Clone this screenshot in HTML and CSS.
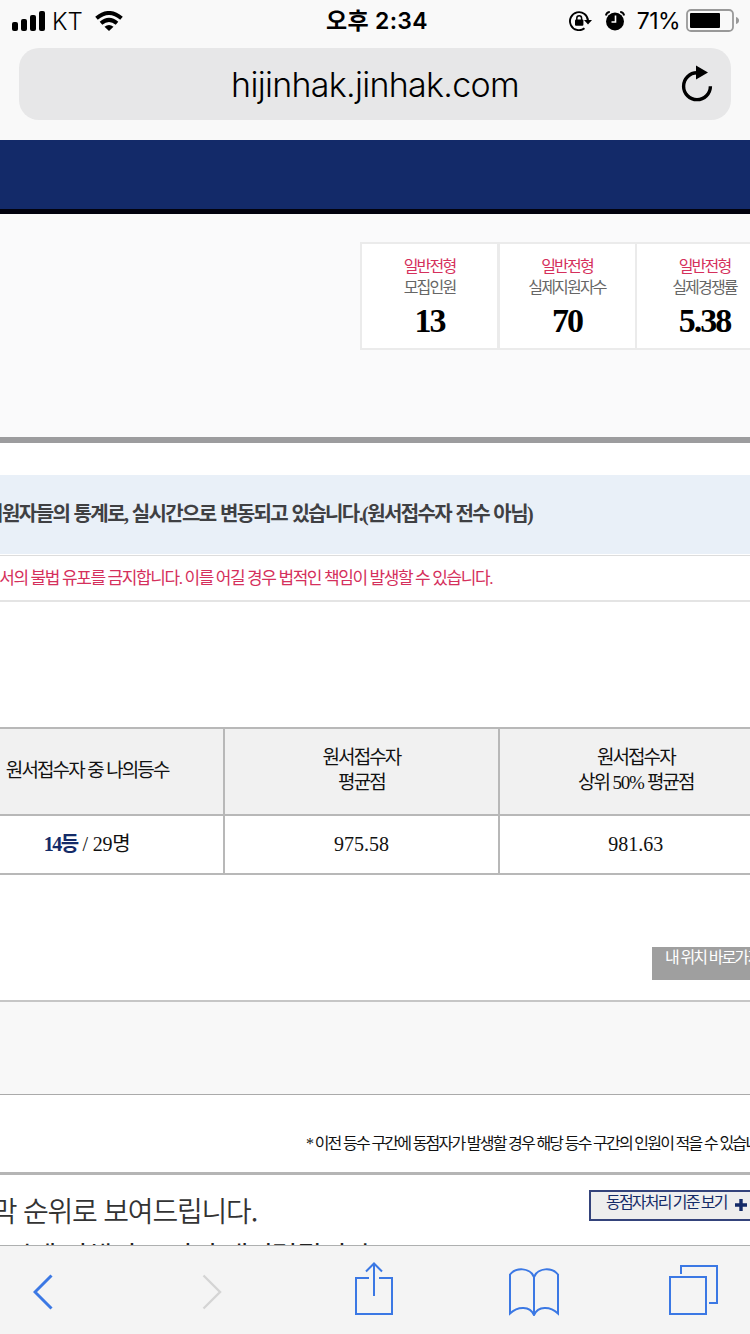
FILE: index.html
```html
<!DOCTYPE html>
<html lang="ko">

<head>
    <meta charset="UTF-8">
    <meta name="viewport" content="width=device-width, initial-scale=1.0">
    <title>hijinhak.jinhak.com</title>
    <link rel="stylesheet" href="styles.css">
</head>

<body>
    <header class="browser-top">
        <div class="status">
            <div class="status-left">
                <svg width="34" height="20" viewBox="0 0 34 20">
                    <rect x="0" y="11" width="6" height="9" rx="2" />
                    <rect x="9" y="8" width="6" height="12" rx="2" />
                    <rect x="18" y="4" width="6" height="16" rx="2" />
                    <rect x="27" y="0" width="6" height="20" rx="2" />
                </svg>
                <span class="carrier">KT</span>
                <svg class="wifi" width="28" height="20" viewBox="0 0 28 20">
                    <g fill="none" stroke="#000" stroke-width="4">
                        <path d="M1.5 7.2Q14-3.2 26.500 7.200" />
                        <path d="M6 12.200Q14 5.500 22 12.200" />
                    </g>
                    <path d="M9.500 15.800Q14 12.200 18.500 15.800L14 20z" />
                </svg>
            </div>
            <div class="time">오후 2:34</div>
            <div class="status-right">
                <svg width="24" height="20" viewBox="0 0 24 20">
                    <path d="M15.500 17.300A9 9 0 1 1 19 10" fill="none" stroke="#000" stroke-width="1.900" />
                    <path d="M15 9h8l-4 4.500z" />
                    <rect x="6" y="8.500" width="8.400" height="6.300" rx="1" />
                    <path d="M7.800 9V7.200a2.400 2.400 0 0 1 4.800 0V9" fill="none" stroke="#000" stroke-width="1.500" />
                </svg>
                <svg class="alarm" width="20" height="20" viewBox="0 0 20 20">
                    <circle cx="10" cy="10.500" r="9" />
                    <path d="M.8 4.500Q1.500 1.200 4.800.8M19.200 4.500Q18.500 1.200 15.200.8" fill="none" stroke="#000" stroke-width="1.800" />
                    <path d="M10.500 4.500V11H6.500" fill="none" stroke="#fff" stroke-width="1.600" />
                </svg>
                <span class="percent">71%</span>
                <svg width="53" height="23" viewBox="0 0 53 23">
                    <rect x="1" y="1" width="46" height="21" rx="4" fill="none" stroke="#999" stroke-width="1.800" />
                    <rect x="4" y="4" width="30" height="15" rx="1" />
                    <path d="M50 8q3 1 3 3.500t-3 3.500z" fill="#999" />
                </svg>
            </div>
        </div>
        <div class="address">
            <span class="url">hijinhak.jinhak.com</span>
            <svg class="reload" width="34" height="38" viewBox="0 0 34 38">
                <path d="M17 7.800A13.400 13.400 0 1 0 30.400 21.200" fill="none" stroke="#000" stroke-width="3.400" />
                <path d="M16 .5l12 7-12 7z" />
            </svg>
        </div>
    </header>

    <main class="page">
        <div class="navbar"></div>

        <section class="summary">
            <div class="card">
                <span class="type">일반전형</span>
                <span class="label">모집인원</span>
                <strong>13</strong>
            </div>
            <div class="card">
                <span class="type">일반전형</span>
                <span class="label">실제지원자수</span>
                <strong>70</strong>
            </div>
            <div class="card">
                <span class="type">일반전형</span>
                <span class="label">실제경쟁률</span>
                <strong>5.38</strong>
            </div>
        </section>

        <div class="notice"><span>지원자들의 통계로, 실시간으로 변동되고 있습니다.(원서접수자 전수 아님)</span></div>
        <div class="warning"><span>서의 불법 유포를 금지합니다. 이를 어길 경우 법적인 책임이 발생할 수 있습니다.</span></div>

        <table class="score">
            <tr>
                <th>원서접수자 중 나의등수</th>
                <th>원서접수자<br>평균점</th>
                <th>원서접수자<br>상위 <span class="num">50%</span> 평균점</th>
            </tr>
            <tr>
                <td class="rank"><b>14등</b> / 29명</td>
                <td>975.58</td>
                <td>981.63</td>
            </tr>
        </table>

        <div class="position-row">
            <div class="position-btn">내 위치 바로가기</div>
        </div>
        <div class="graph"></div>
        <div class="remark">* 이전 등수 구간에 동점자가 발생할 경우 해당 등수 구간의 인원이 적을 수 있습니다.</div>

        <section class="guide">
            <div class="guide-text">
                <p class="line1"><span>막 순위로 보여드립니다.</span></p>
                <p class="line2"><span>시에 의해이로 되어 재정렬됩니다</span></p>
            </div>
            <div class="tie-btn">
                <span>동점자처리 기준 보기</span>
                <svg width="12" height="12" viewBox="0 0 12 12">
                    <path d="M6 0v12M0 6h12" stroke="#142b68" stroke-width="3.400" />
                </svg>
            </div>
        </section>
    </main>

    <footer class="toolbar">
        <svg width="20" height="36" viewBox="0 0 20 36">
            <path d="M18.500 1.500L2 18l16.500 16.500" stroke-width="3" />
        </svg>
        <svg class="forward" width="20" height="36" viewBox="0 0 20 36">
            <path d="M1.500 1.500L18 18 1.500 34.500" stroke-width="2.400" />
        </svg>
        <svg class="share" width="38" height="53" viewBox="0 0 38 53">
            <path d="M14 16H1v36h36V16H24M19 34V2M11 9.500L19 1.500l8 8" />
        </svg>
        <svg class="book" width="50" height="48" viewBox="0 0 50 48">
            <path d="M25 9V47M25 9C21-.5 7-1 1 6.500V45.500C9 38 21 38 25 47C29 38 41 38 49 45.500V6.500C43-1 29-.5 25 9" />
        </svg>
        <svg class="tabs" width="50" height="50" viewBox="0 0 50 50">
            <path d="M1 12h36v37H1zM12 9V1h36v37h-8" />
        </svg>
    </footer>
</body>

</html>
```

FILE: styles.css
```css
* {
    box-sizing: border-box;
}

body {
    margin: 0;
    width: 750px;
    height: 1334px;
    overflow: hidden;
    display: flex;
    flex-direction: column;
    background-color: #fff;
    font-family: "Liberation Serif", "Noto Sans CJK KR", serif;
}

svg {
    display: block;
    flex: none;
}

.browser-top {
    height: 140px;
    flex: none;
    background-color: #f9f9f9;
    font-family: Inter, "Noto Sans CJK KR", sans-serif;
}

.status {
    height: 48px;
    padding: 0 11px 9px 12px;
    display: grid;
    grid-template-columns: 1fr auto 1fr;
    align-items: center;
}

.status-left,
.status-right {
    display: flex;
    align-items: center;
}

.status-right {
    justify-content: flex-end;
}

.carrier {
    font-size: 24px;
    font-weight: 300;
    margin: 1px 0 0 6px;
}

.wifi {
    margin-left: 12px;
}

.time {
    font-size: 23px;
    font-weight: 600;
    letter-spacing: 0.3px;
    line-height: 40px;
    padding: 1px 0 0 3px;
}

.alarm {
    margin-left: 12px;
}

.percent {
    font-size: 23px;
    letter-spacing: -0.6px;
    margin: 1px 6px 0 12px;
}

.address {
    height: 72px;
    margin: 0 19px;
    border-radius: 20px;
    background-color: #e7e7e8;
    display: grid;
    grid-template-columns: 1fr auto 1fr;
    align-items: center;
}

.url {
    grid-column: 2;
    font-size: 34px;
    font-weight: 350;
    letter-spacing: -0.7px;
}

.reload {
    justify-self: end;
    margin-right: 17px;
}

.page {
    height: 1105px;
    flex: none;
    overflow: hidden;
}

.navbar {
    height: 74px;
    background-color: #132a69;
    border-bottom: 5px solid #02020e;
}

.summary {
    height: 229px;
    padding: 28px 0 0 360px;
    display: flex;
    align-items: flex-start;
    background-color: #fafafb;
    border-bottom: 6px solid #9c9c9e;
}

.card {
    width: 139px;
    height: 108px;
    margin-right: -1.5px;
    padding-top: 12px;
    flex: none;
    display: flex;
    flex-direction: column;
    align-items: center;
    background-color: #fff;
    border: 2px solid #ebebeb;
    font-size: 16px;
    line-height: 21px;
    letter-spacing: -1.8px;
    white-space: nowrap;
}

.type {
    color: #d5305c;
}

.label {
    color: #666;
}

.card strong {
    font-size: 34px;
    line-height: 45px;
    letter-spacing: -2px;
}

.notice {
    width: 750px;
    height: 79px;
    margin-top: 32px;
    padding-right: 218px;
    display: flex;
    justify-content: flex-end;
    background-color: #e9f0f8;
    color: #3f4043;
    font-size: 20px;
    font-weight: 600;
    letter-spacing: -1.6px;
    word-spacing: 0.9px;
    line-height: 79px;
    white-space: nowrap;
}

.notice span {
    margin-left: -20px;
}

.warning {
    height: 47px;
    margin-top: 1px;
    padding-right: 258px;
    display: flex;
    justify-content: flex-end;
    border-top: 1px solid #ddd;
    border-bottom: 2px solid #e4e4e4;
    color: #d5305c;
    font-size: 17px;
    letter-spacing: -1.4px;
    line-height: 46px;
    white-space: nowrap;
}

.score {
    width: 825px;
    margin: 125px 0 0 -51px;
    border-collapse: collapse;
    table-layout: fixed;
    color: #111;
    text-align: center;
}

.score th,
.score td {
    border: 2px solid #b8b8b8;
    padding: 0;
}

.score th {
    height: 87px;
    padding-bottom: 3px;
    background-color: #f1f1f1;
    font-size: 19px;
    font-weight: 400;
    line-height: 25px;
    letter-spacing: -1.9px;
    word-spacing: 0.6px;
}

.score .num {
    letter-spacing: -1.3px;
}

.score td {
    height: 59px;
    padding-bottom: 2px;
    font-size: 20px;
    line-height: 24px;
}

.score .rank {
    padding-bottom: 2px;
    letter-spacing: -0.2px;
}

.score b {
    color: #142b68;
    letter-spacing: -1.5px;
}

.position-row {
    height: 125px;
    padding: 72px 0 0 652px;
}

.position-btn {
    width: 140px;
    height: 33px;
    padding-left: 13px;
    background-color: #9f9f9f;
    color: #fff;
    font-size: 16px;
    letter-spacing: -1.8px;
    word-spacing: 0.3px;
    line-height: 22px;
    white-space: nowrap;
}

.graph {
    height: 95px;
    background-color: #f8f8f8;
    border-top: 2px solid #c6c6c6;
    border-bottom: 1px solid #aaa;
}

.remark {
    height: 80px;
    padding-left: 306px;
    border-bottom: 3px solid #b5b5b5;
    color: #111;
    font-size: 16px;
    letter-spacing: -1.8px;
    word-spacing: 0.3px;
    line-height: 97px;
    white-space: nowrap;
}

.guide {
    display: flex;
}

.guide-text {
    width: 589px;
    flex: none;
    color: #333;
    font-family: "Noto Sans CJK KR", sans-serif;
    font-size: 28px;
    font-weight: 350;
    letter-spacing: -1.2px;
    line-height: 42px;
    white-space: nowrap;
}

.guide-text p {
    margin: 0;
    display: flex;
    justify-content: flex-end;
}

.guide-text .line1 {
    padding: 14px 332px 0 0;
}

.guide-text .line2 {
    padding: 3px 219px 0 0;
    color: #222;
    font-weight: 400;
}

.tie-btn {
    width: 180px;
    height: 31px;
    margin-top: 15px;
    padding-left: 15px;
    flex: none;
    display: flex;
    background-color: #eee;
    border: 2px solid #34437b;
    color: #142b68;
    font-size: 16px;
    letter-spacing: -1.8px;
    line-height: 21px;
    white-space: nowrap;
}

.tie-btn svg {
    margin: 7px 0 0 8px;
}

.toolbar {
    height: 89px;
    flex: none;
    padding: 0 32px 0 33px;
    display: flex;
    align-items: flex-start;
    background-color: #f4f4f4;
    border-top: 1px solid #aeb0b0;
}

.toolbar svg {
    fill: none;
    stroke: #3b78e4;
    stroke-width: 2;
    margin-top: 28px;
}

.toolbar .forward {
    margin-left: 149px;
    stroke: #d4d4d4;
}

.toolbar .share {
    margin: 16px 0 0 133px;
}

.toolbar .book {
    margin: 22px 0 0 116px;
}

.toolbar .tabs {
    margin: 19px 0 0 110px;
}
```
